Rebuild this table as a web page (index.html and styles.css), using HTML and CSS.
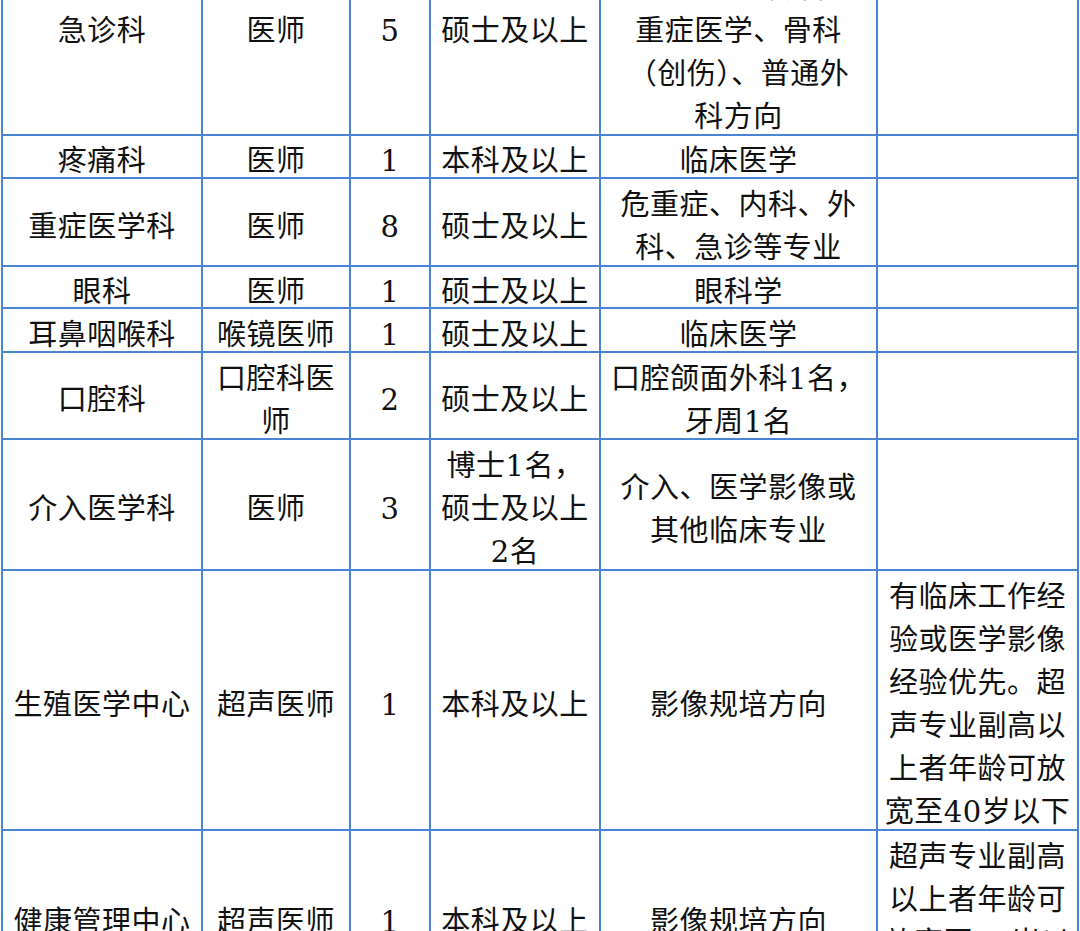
FILE: index.html
```html
<!DOCTYPE html>
<html lang="zh-CN">
<head>
<meta charset="utf-8">
<title>招聘岗位表</title>
<link rel="stylesheet" href="styles.css">
</head>
<body>
<div class="sheet">
  <div class="cell">急诊科</div>
  <div class="cell">医师</div>
  <div class="cell">5</div>
  <div class="cell">硕士及以上</div>
  <div class="cell">临床医学专业，<br>急诊医学、内科、<br>重症医学、骨科<br>（创伤）、普通外<br>科方向</div>
  <div class="cell"></div>

  <div class="cell">疼痛科</div>
  <div class="cell">医师</div>
  <div class="cell">1</div>
  <div class="cell">本科及以上</div>
  <div class="cell">临床医学</div>
  <div class="cell"></div>

  <div class="cell">重症医学科</div>
  <div class="cell">医师</div>
  <div class="cell">8</div>
  <div class="cell">硕士及以上</div>
  <div class="cell">危重症、内科、外<br>科、急诊等专业</div>
  <div class="cell"></div>

  <div class="cell">眼科</div>
  <div class="cell">医师</div>
  <div class="cell">1</div>
  <div class="cell">硕士及以上</div>
  <div class="cell">眼科学</div>
  <div class="cell"></div>

  <div class="cell">耳鼻咽喉科</div>
  <div class="cell">喉镜医师</div>
  <div class="cell">1</div>
  <div class="cell">硕士及以上</div>
  <div class="cell">临床医学</div>
  <div class="cell"></div>

  <div class="cell">口腔科</div>
  <div class="cell">口腔科医<br>师</div>
  <div class="cell">2</div>
  <div class="cell">硕士及以上</div>
  <div class="cell">口腔颌面外科1名，<br>牙周1名</div>
  <div class="cell"></div>

  <div class="cell">介入医学科</div>
  <div class="cell">医师</div>
  <div class="cell">3</div>
  <div class="cell">博士1名，<br>硕士及以上<br>2名</div>
  <div class="cell">介入、医学影像或<br>其他临床专业</div>
  <div class="cell"></div>

  <div class="cell">生殖医学中心</div>
  <div class="cell">超声医师</div>
  <div class="cell">1</div>
  <div class="cell">本科及以上</div>
  <div class="cell">影像规培方向</div>
  <div class="cell">有临床工作经<br>验或医学影像<br>经验优先。超<br>声专业副高以<br>上者年龄可放<br>宽至40岁以下</div>

  <div class="cell">健康管理中心</div>
  <div class="cell">超声医师</div>
  <div class="cell">1</div>
  <div class="cell">本科及以上</div>
  <div class="cell">影像规培方向</div>
  <div class="cell">超声专业副高<br>以上者年龄可<br>放宽至40岁以<br>下</div>
</div>
</body>
</html>
```

FILE: styles.css
```css
html, body {
  margin: 0;
  padding: 0;
  background: #ffffff;
  overflow: hidden;
}

body {
  width: 1080px;
  height: 931px;
}

.sheet {
  display: grid;
  grid-template-columns: 200px 148px 80px 170px 277px 201px;
  grid-template-rows: 218px 43px 88px 42px 44px 87px 131px 260px 174px;
  margin: -84px 0 0 1px;
  width: max-content;
  border-left: 2px solid #4a84d4;
  border-top: 2px solid #4a84d4;
  font-family: "DejaVu Serif", "Noto Sans CJK SC", sans-serif;
  font-size: 29px;
  letter-spacing: 0.5px;
  line-height: 43px;
  color: #111111;
}

.cell {
  box-sizing: border-box;
  display: flex;
  align-items: center;
  justify-content: center;
  text-align: center;
  padding-top: 10px;
  border-right: 2px solid #4a84d4;
  border-bottom: 2px solid #4a84d4;
  white-space: nowrap;
  overflow: visible;
}
```
